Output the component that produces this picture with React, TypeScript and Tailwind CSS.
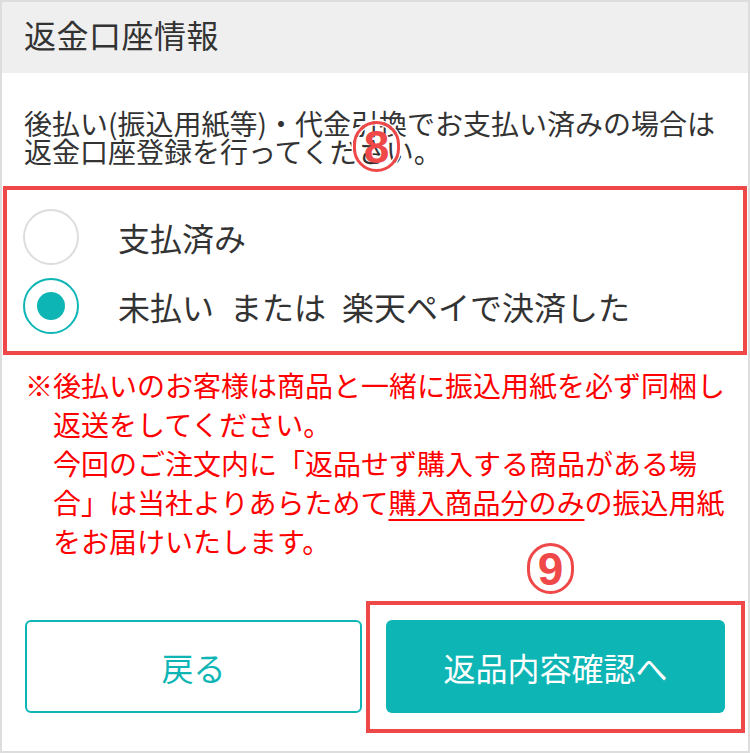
const jp = { fontFamily: '"Noto Sans CJK JP", "Noto Sans", sans-serif' };

function Marker({ n }: { n: string }) {
  return (
    <span
      className="flex h-[51px] w-[47px] items-center justify-center rounded-full border-[3.5px] border-[#ef4848] bg-transparent pt-[1px] text-[46px] font-bold leading-none text-[#ef4848] shadow-[0_0_0_1.5px_#fff,inset_0_0_0_1.5px_#fff]"
      style={{ fontFamily: '"Liberation Sans", Arial, sans-serif' }}
    >
      {n}
    </span>
  );
}

function Radio({ checked, label }: { checked?: boolean; label: string }) {
  return (
    <label className="flex h-[69px] items-center">
      <span
        className={
          checked
            ? "flex h-[56px] w-[56px] items-center justify-center rounded-full border-2 border-[#0eb5b5]"
            : "flex h-[56px] w-[56px] items-center justify-center rounded-full border-2 border-[#dddddd]"
        }
      >
        {checked && <span className="h-[28px] w-[28px] rounded-full bg-[#0eb5b5]" />}
      </span>
      <span className="ml-[39px] whitespace-nowrap text-[32px] leading-none text-[#333]">{label}</span>
    </label>
  );
}

export default function App() {
  return (
    <div className="h-[753px] w-[750px] border-2 border-[#dddddd] bg-white" style={jp}>
      <div className="flex h-[71px] items-center bg-[#efefef] px-[22px] pb-[8px]">
        <h1 className="text-[32px] font-normal tracking-[0.5px] text-[#333]">返金口座情報</h1>
      </div>

      <div className="relative mt-[36px] px-[22px]">
        <p className="whitespace-nowrap text-[28px] leading-[28px] text-[#333]">
          後払い(振込用紙等)・代金引換でお支払い済みの場合は
          <br />
          返金口座登録を行ってください。
        </p>
        <span className="absolute left-[351px] top-[12px]">
          <Marker n="8" />
        </span>
      </div>

      <div className="mx-[1px] mt-[21px] border-4 border-[#ef4848] pb-[11px] pl-[16px] pt-[12px]">
        <Radio label="支払済み" />
        <Radio checked label={"未払い\u2002または\u2002楽天ペイで決済した"} />
      </div>

      <div className="mt-[11px] px-[23px] text-[28px] leading-[39px] text-[#ff0000]">
        <p className="whitespace-nowrap pl-[28px] -indent-[28px]">
          ※後払いのお客様は商品と一緒に振込用紙を必ず同梱し
          <br />
          返送をしてください。
          <br />
          今回のご注文内に「返品せず購入する商品がある場
          <br />
          合」は当社よりあらためて
          <span className="underline decoration-2 underline-offset-[5px]">購入商品分のみ</span>
          の振込用紙
          <br />
          をお届けいたします。
        </p>
      </div>

      <div className="mt-[59px] flex gap-[24px] px-[23px]">
        <button className="flex h-[93px] w-[338px] items-center justify-center rounded-[6px] border-2 border-[#0eb5b5] bg-white text-[32px] text-[#0eb5b5]">
          戻る
        </button>
        <div className="relative">
          <button className="flex h-[93px] w-[339px] items-center justify-center rounded-[6px] bg-[#0eb5b5] text-[32px] text-white">
            返品内容確認へ
          </button>
          <span className="pointer-events-none absolute -bottom-[20px] -left-[20px] -right-[20px] -top-[19px] border-4 border-[#ef4848]" />
          <span className="absolute -top-[77px] left-[141px]">
            <Marker n="9" />
          </span>
        </div>
      </div>
    </div>
  );
}
